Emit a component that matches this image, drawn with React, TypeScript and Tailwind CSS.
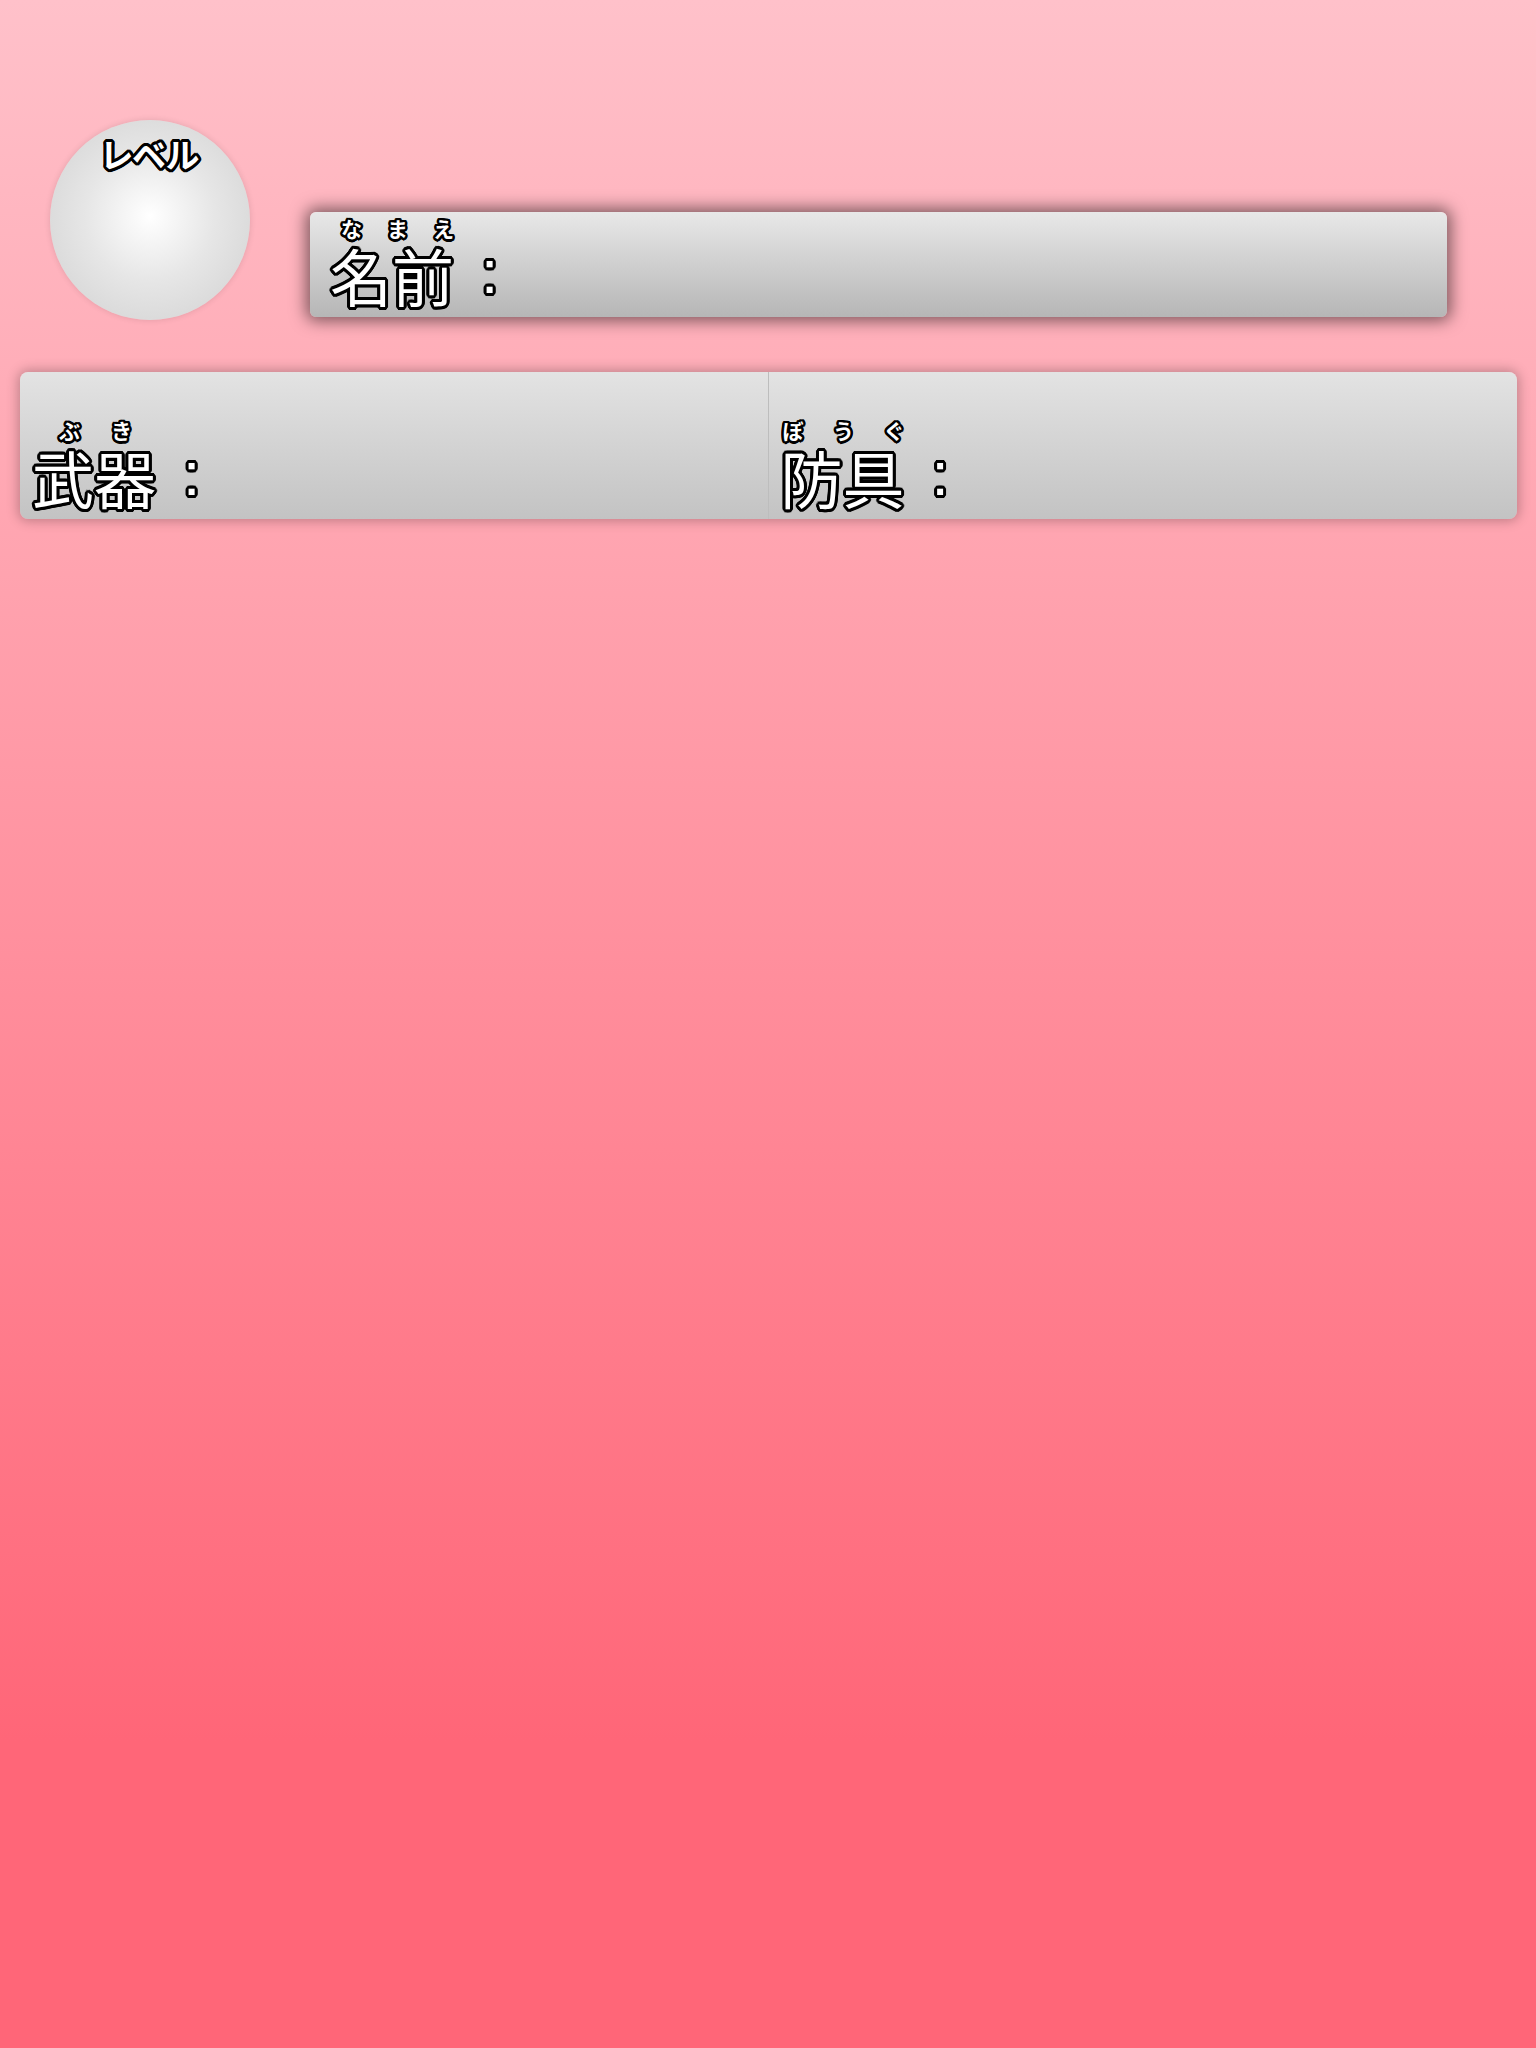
import React from "react";

const outline3 =
  "[text-shadow:3px_0_0_#000,-3px_0_0_#000,0_3px_0_#000,0_-3px_0_#000,2.8px_1.2px_0_#000,-2.8px_1.2px_0_#000,2.8px_-1.2px_0_#000,-2.8px_-1.2px_0_#000,1.2px_2.8px_0_#000,-1.2px_2.8px_0_#000,1.2px_-2.8px_0_#000,-1.2px_-2.8px_0_#000,2.1px_2.1px_0_#000,-2.1px_2.1px_0_#000,2.1px_-2.1px_0_#000,-2.1px_-2.1px_0_#000]";
const outline2 =
  "[text-shadow:2.5px_0_0_#000,-2.5px_0_0_#000,0_2.5px_0_#000,0_-2.5px_0_#000,1.8px_1.8px_0_#000,-1.8px_1.8px_0_#000,1.8px_-1.8px_0_#000,-1.8px_-1.8px_0_#000,2.3px_1px_0_#000,-2.3px_1px_0_#000,2.3px_-1px_0_#000,-2.3px_-1px_0_#000,1px_2.3px_0_#000,-1px_2.3px_0_#000,1px_-2.3px_0_#000,-1px_-2.3px_0_#000]";

const font = "font-['Noto_Sans_CJK_JP','Noto_Sans_CJK_SC',sans-serif]";

function Label({
  base,
  ruby,
  rubyPad,
}: {
  base: string;
  ruby: string[];
  rubyPad: string;
}) {
  return (
    <div className={`flex flex-col text-white ${font}`}>
      <div
        className={`flex w-[124px] justify-between text-[21px] leading-none font-bold mb-[2px] ${rubyPad} ${outline2}`}
      >
        {ruby.map((r, i) => (
          <span key={i}>{r}</span>
        ))}
      </div>
      <div className={`text-[62px] leading-none whitespace-nowrap ${outline3}`}>
        {base}
        <span className="ml-[27px] align-[9px] font-['Liberation_Sans',sans-serif]">:</span>
      </div>
    </div>
  );
}

export default function App() {
  return (
    <div className="min-h-[2048px] w-full bg-[linear-gradient(to_bottom,#ffc1ca_0%,#ff6678_85%,#ff6678_100%)]">
      <div className="flex items-end pt-[120px] pl-[50px] pr-[89px]">
        <div className="w-[200px] h-[200px] shrink-0 rounded-full bg-[radial-gradient(circle_at_50%_48%,#ffffff_0%,#e6e6e6_45%,#cfcfcf_100%)] shadow-[0_0_6px_rgba(0,0,0,0.12)] flex flex-col items-center pt-[17px]">
          <span
            className={`text-white text-[34px] leading-none font-bold [font-feature-settings:'palt'] ${font} ${outline3}`}
          >
            レベル
          </span>
        </div>
        <div className="ml-[60px] mb-[3px] flex-1 h-[105px] rounded-md bg-[linear-gradient(to_bottom,#e8e8e8,#b6b6b6)] shadow-[0_0_16px_4px_rgba(0,0,0,0.5)] flex items-center pl-[20px] pb-[6px]">
          <Label base="名前" ruby={["な", "ま", "え"]} rubyPad="pl-[11px]" />
        </div>
      </div>
      <div className="mt-[52px] ml-[20px] mr-[19px] h-[147px] rounded-lg bg-[linear-gradient(to_bottom,#e3e3e3,#c3c3c3)] shadow-[0_0_12px_2px_rgba(0,0,0,0.25)] grid grid-cols-2">
        <div className="flex items-end pl-[12px] pb-[11px] border-r border-[#bdbdbd]">
          <Label base="武器" ruby={["ぶ", "き"]} rubyPad="pl-[27px] pr-[24px]" />
        </div>
        <div className="flex items-end pl-[12px] pb-[11px]">
          <Label base="防具" ruby={["ぼ", "う", "ぐ"]} rubyPad="pl-[2px]" />
        </div>
      </div>
    </div>
  );
}
